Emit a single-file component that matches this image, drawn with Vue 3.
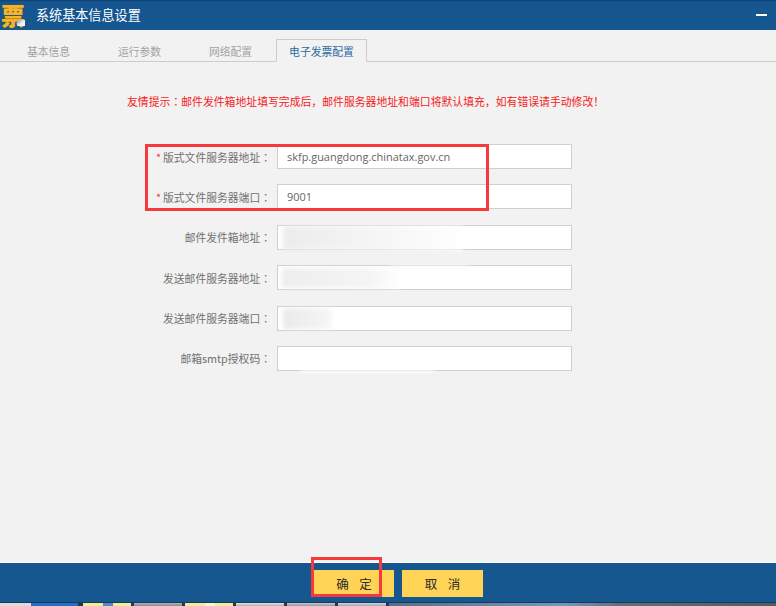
<script setup>
const tabs = [
  { label: '基本信息' },
  { label: '运行参数' },
  { label: '网络配置' },
  { label: '电子发票配置', active: true },
]
const fields = [
  { label: '版式文件服务器地址', value: 'skfp.guangdong.chinatax.gov.cn', required: true },
  { label: '版式文件服务器端口', value: '9001', required: true },
  { label: '邮件发件箱地址', value: '' },
  { label: '发送邮件服务器地址', value: '' },
  { label: '发送邮件服务器端口', value: '' },
  { label: '邮箱smtp授权码', value: '' },
]
const tiles = [
  { w: 80, c: 'linear-gradient(90deg,#d9dde0 0 31px,#1f70c8 31px 78px,#1d3a55 78px)' },
  { w: 48, c: 'linear-gradient(90deg,#f2ec9a 0 20px,#4a8fc0 20px 30px,#f2ec9a 30px)' },
  { w: 48, c: 'linear-gradient(#aeb6bf,#7f8a96)' },
  { w: 48, c: 'linear-gradient(90deg,#f2ec9a 0 20px,#f7f5d8 20px 30px,#f2ec9a 30px)' },
  { w: 48, c: 'linear-gradient(#e4e6e8,#a9b0b8)' },
  { w: 48, c: 'linear-gradient(#c5ccd4,#8796a8)' },
  { w: 48, c: 'linear-gradient(#d5d9de,#97a3b0)' },
]
</script>

<template>
  <div class="page">
    <header class="head">
      <div class="logo">票<i class="curl"></i></div>
      <h1 class="title">系统基本信息设置</h1>
      <span class="minimize"></span>
    </header>

    <nav class="tabs">
      <span v-for="t in tabs" :key="t.label" class="tab" :class="{ active: t.active }">{{ t.label }}</span>
    </nav>

    <main class="body">
      <p class="notice">友情提示<span class="colon">：</span>邮件发件箱地址填写完成后，邮件服务器地址和端口将默认填充，如有错误请手动修改！</p>
      <form class="form">
        <div v-for="f in fields" :key="f.label" class="row">
          <label class="label"><span v-if="f.required" class="star">*</span>{{ f.label }}<span class="colon">：</span></label>
          <div class="input">{{ f.value }}</div>
        </div>
      </form>
    </main>

    <footer class="foot">
      <button class="btn first">确定</button>
      <button class="btn">取消</button>
    </footer>

    <div class="strip">
      <span v-for="(t, i) in tiles" :key="i" class="tile" :style="{ width: t.w + 'px', background: t.c }"></span>
      <span class="rest"></span>
    </div>

    <!-- redaction smudges over the inputs -->
    <i class="smudge s1"></i>
    <i class="smudge s2"></i>
    <i class="smudge s3"></i>
    <i class="smudge s4"></i>
    <i class="smudge s5"></i>

    <!-- annotation rectangles -->
    <i class="mark m1"></i>
    <i class="mark m2"></i>
  </div>
</template>

<style scoped>
.page {
  position: relative;
  width: 776px;
  height: 606px;
  overflow: hidden;
  display: flex;
  flex-direction: column;
  background: #f2f2f2;
  font-family: "Noto Sans CJK SC", "Liberation Sans", sans-serif;
}
.head {
  height: 30px;
  flex: none;
  display: flex;
  align-items: center;
  background: linear-gradient(#0f3f70 0, #155690 2px, #165790 100%);
  color: #fff;
}
.logo {
  position: relative;
  width: 26px;
  height: 30px;
  font-size: 24px;
  line-height: 30px;
  font-weight: 900;
  text-align: center;
  color: #f7b42a;
  text-shadow: 0 0 1px #8a5a00;
}
.curl {
  position: absolute;
  left: 17px;
  top: 20px;
  width: 8px;
  height: 6px;
  background: linear-gradient(135deg, #8a9aa8, #f4f4f4 60%);
}
.title {
  margin: 0 0 0 10px;
  font-size: 13.1px;
  font-weight: 400;
  line-height: 30px;
}
.minimize {
  margin-left: auto;
  margin-right: 9px;
  width: 11px;
  height: 2px;
  background: #fff;
  box-shadow: 0 0 1px #0b2f60;
}
.tabs {
  height: 32px;
  flex: none;
  box-sizing: border-box;
  padding: 9px 0 0 3px;
  display: flex;
  border-bottom: 1px solid #cccccc;
}
.tab {
  box-sizing: border-box;
  width: 91px;
  height: 23px;
  font-size: 10.8px;
  line-height: 22px;
  text-align: center;
  color: #a3a3a3;
  border: 1px solid transparent;
  border-bottom: 0;
  flex: none;
}
.tab.active {
  color: #2a6a9e;
  background: #f2f2f2;
  border-color: #cccccc;
}
.body {
  flex: 1;
  min-height: 0;
  padding-top: 31px;
  box-sizing: border-box;
}
.notice {
  margin: 0 0 0 127px;
  font-size: 10.85px;
  line-height: 16px;
  color: #f51a1a;
  white-space: nowrap;
}
.colon {
  font-family: "Noto Sans CJK TC", sans-serif;
}
.form {
  margin-top: 35px;
  display: flex;
  flex-direction: column;
  gap: 15.4px;
}
.row {
  display: flex;
  align-items: center;
  height: 25px;
}
.label {
  width: 271px;
  flex: none;
  text-align: right;
  font-size: 10.8px;
  color: #717171;
  white-space: nowrap;
}
.star {
  color: #f33;
  margin-right: 2px;
}
.input {
  margin-left: 6px;
  box-sizing: border-box;
  width: 295px;
  height: 25px;
  padding-left: 9px;
  background: #fff;
  border: 1px solid #cfcfcf;
  font-family: "Open Sans", "Liberation Sans", sans-serif;
  font-size: 10.95px;
  line-height: 23px;
  color: #666;
}
.foot {
  height: 41px;
  flex: none;
  box-sizing: border-box;
  border-top: 1px solid #fff;
  background: #165790;
  display: flex;
  align-items: flex-start;
  gap: 8px;
  padding: 7px 0 0 314px;
}
.btn {
  width: 81px;
  height: 27px;
  padding: 0;
  border: 0;
  background: #ffd356;
  color: #2b2b2b;
  font-family: inherit;
  font-size: 12.5px;
  letter-spacing: 10.5px;
  text-indent: 10.5px;
  line-height: 27px;
}
.btn.first {
  width: 80px;
}
.strip {
  height: 4px;
  flex: none;
  box-sizing: border-box;
  padding-top: 1px;
  display: flex;
  gap: 3px;
  background: #1d3a55;
  margin-top: -1px;
}
.tile {
  flex: none;
  display: block;
}
.rest {
  flex: 1;
  background: linear-gradient(90deg, #54718f, #7097bf 45%, #5d7083 60%, #4e5c68);
}
.smudge {
  position: absolute;
  display: block;
  background: #fff;
  filter: blur(2px);
}
.s1 { left: 283px; top: 226px; width: 180px; height: 24px; background: linear-gradient(90deg, #ececec, #f5f5f5 50%, #fff); }
.s2 { left: 282px; top: 268px; width: 118px; height: 20px; background: linear-gradient(90deg, #eeeeee, #f5f5f5 75%, #fff); }
.s3 { left: 283px; top: 308px; width: 48px; height: 21px; background: linear-gradient(90deg, #eaeaea, #f6f6f6); }
.s4 { left: 300px; top: 369px; width: 135px; height: 3px; }
.s5 { left: 390px; top: 264px; width: 80px; height: 3px; background: #f6f6f6; }
.mark {
  position: absolute;
  display: block;
  box-sizing: border-box;
  border: 3px solid #f5393c;
}
.m1 { left: 145px; top: 144px; width: 344px; height: 67px; }
.m2 { left: 311px; top: 557px; width: 71px; height: 40px; }
</style>
